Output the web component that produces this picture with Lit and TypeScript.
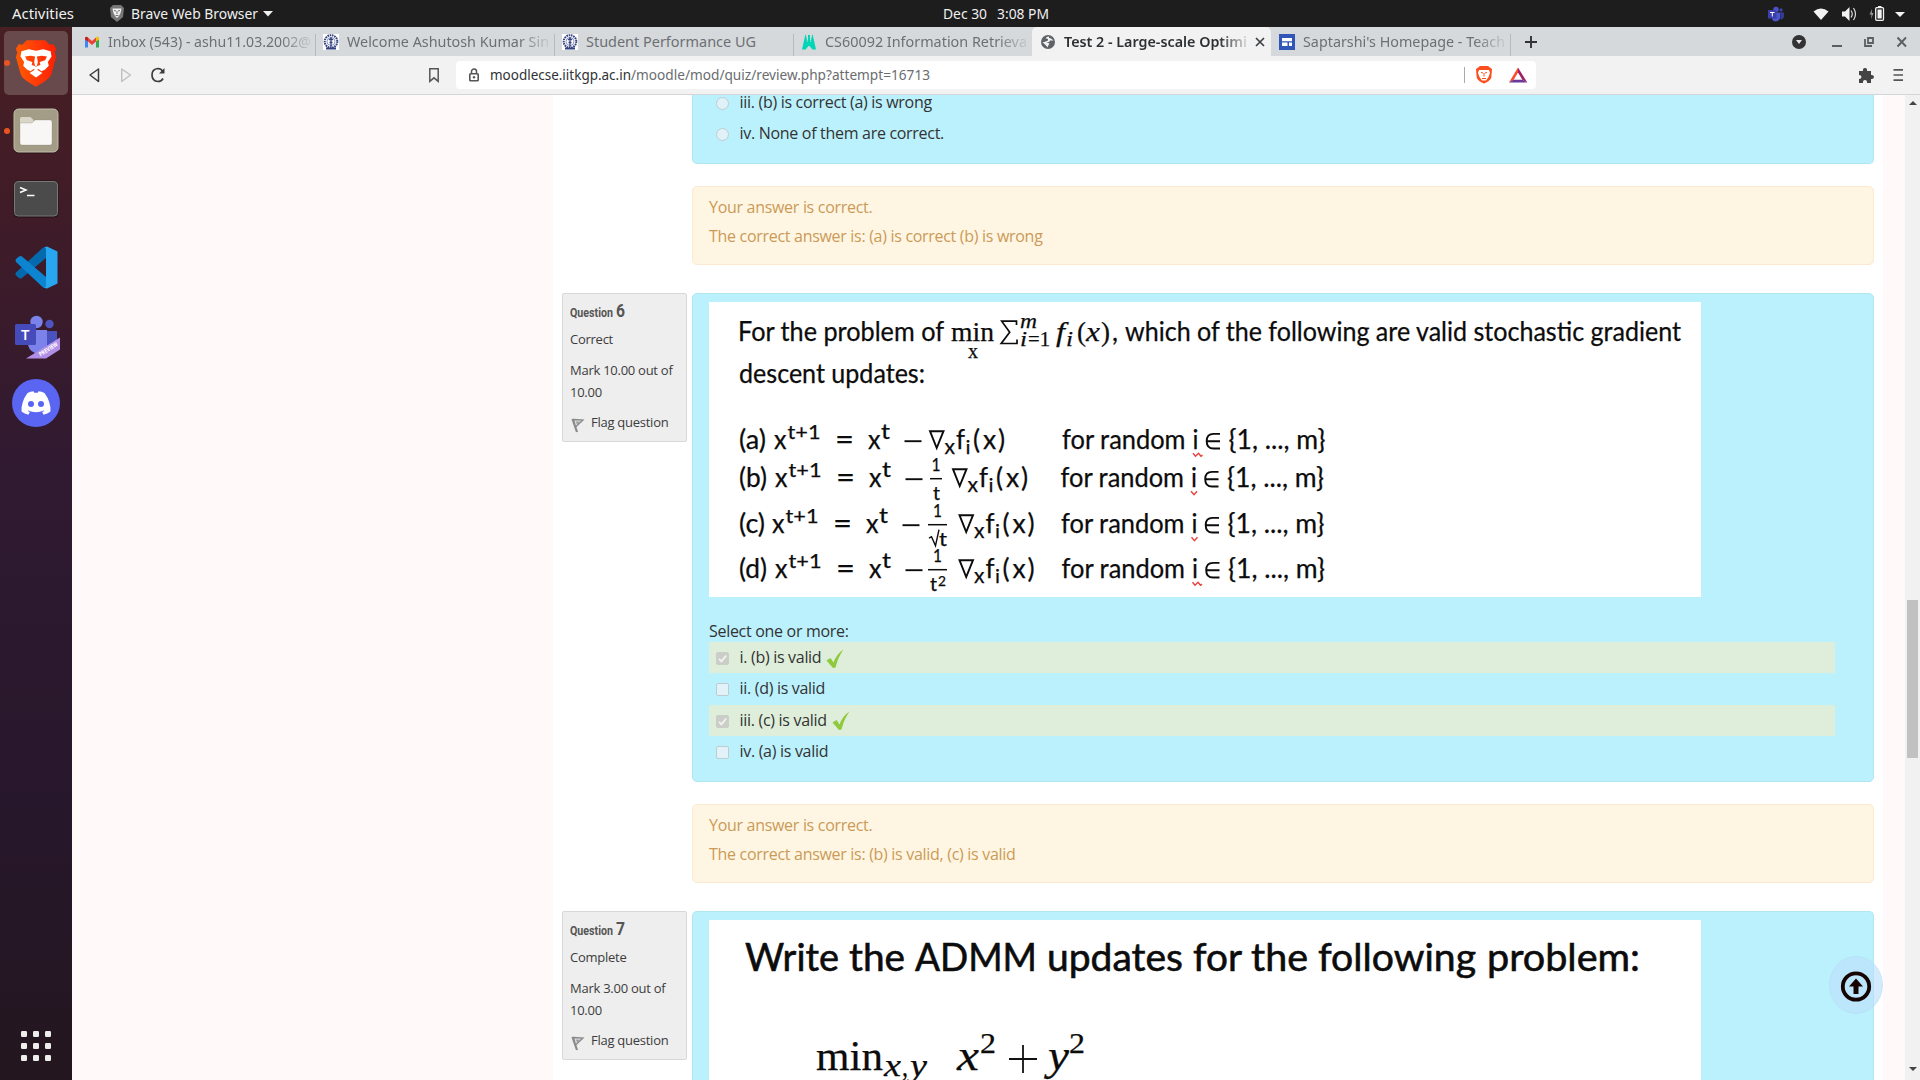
import { LitElement, html, css, svg } from "lit";
import { customElement } from "lit/decorators.js";

/* One line of text drawn to an exact advance width. */
const fit = (text: string, width: number, cls = "", size = 14.8) => html`
  <svg class="fit ${cls}" width=${width} height="20" viewBox="0 0 ${width} 20">
    <text x="0" y="15" font-size=${size} textLength=${width} lengthAdjust="spacingAndGlyphs">${text}</text>
  </svg>`;

const braveLogo = html`<svg width="42" height="50" viewBox="0 0 46 52">
  <defs><linearGradient id="bg"><stop offset="0" stop-color="#ff5a00"/><stop offset=".55" stop-color="#ff3a0a"/><stop offset="1" stop-color="#ff1e00"/></linearGradient></defs>
  <path fill="url(#bg)" d="M13 1h20l5 5 4-.500 3 5-1.500 4 1.500 5-5 18c-1 4-4 6-8 9l-9 5.500-9-5.500c-4-3-7-5-8-9L1 19.500l1.500-5L1 10.500l3-5 4 .500z"/>
  <path fill="#fff" d="M7 13l8-2 8 1.500L31 11l8 2 1 6-4 6 1 4-4 4-4 2-4-3 3-3-1-4 6-2 2-4-6-1-5 1 1 6-1 4-1 .500-1-.500-1-4 1-6-5-1-6 1 2 4 6 2-1 4 3 3-4 3-4-2-4-4 1-4-4-6z"/>
  <path fill="#fff" d="M17 28l4 1 2 1 2-1 4-1-2 4-4 2-4-2zM16 37l7-4.500 7 4.500-7 5z"/>
</svg>`;

const filesLogo = html`<svg width="46" height="46" viewBox="0 0 46 46">
  <rect x=".5" y=".5" width="45" height="45" rx="5" fill="#2b1318"/>
  <rect x="1" y="1" width="44" height="43" rx="4.500" fill="#a39c86" stroke="#c5bfac"/>
  <path d="M7 10.500q0-1.500 1.500-1.500h9l3 3v6H7z" fill="#d9d5c7"/>
  <path d="M7 15h12l3-3h15q2 0 2 2v21q0 2-2 2H9q-2 0-2-2z" fill="#f8f7f5" stroke="#7d7766" stroke-opacity=".35" stroke-width=".7"/>
</svg>`;

const terminalLogo = html`<svg width="46" height="38" viewBox="0 0 46 38">
  <rect x=".5" y=".5" width="45" height="37" rx="4.500" fill="#221316"/>
  <rect x="1.500" y="1.500" width="43" height="34.500" rx="3.500" fill="#4b4b4b" stroke="#777"/>
  <path d="M7 7.500l6 2.500-6 2.500" fill="none" stroke="#fff" stroke-width="1.500"/><path d="M14 15.500h7.500" stroke="#fff" stroke-width="1.500"/>
</svg>`;

const codeLogo = html`<svg width="43" height="43" viewBox="0 0 43 43">
  <path fill="#0569ad" d="M31 1v11L7 32q-1.500 1-3 0L1 29.500q-1-1.500 0-3L27 2.500q2-2 4-1.500z"/>
  <path fill="#0d84d0" d="M31 42V31L7 10.500q-1.500-1-3 0L1 13q-1 1.500 0 3l26 24.500q2 2 4 1.500z"/>
  <path fill="#28a6f0" d="M32 .500l10.500 5v32L32 42.500q-1.500 0-3-1.500 2 1 2-1.500V3.500Q31 1 29 2q1-1.500 3-1.500z"/>
</svg>`;

const teamsLogo = html`<svg class="teams" width="46" height="44" viewBox="0 0 46 44">
  <circle cx="35.500" cy="9" r="4.200" fill="#4e55c0"/><circle cx="22.500" cy="7" r="6.200" fill="#7b83eb"/>
  <path fill="#4a52bd" d="M32 16h11v12q0 7-7 7h-4z"/>
  <path fill="#7b83eb" d="M14 15h19v15q0 8-8 9-9-1-11-9z"/>
  <rect x="1" y="9" width="21" height="21" rx="1.500" fill="#464bbc"/>
  <text x="7" y="25" font-family="Open Sans" font-weight="600" font-size="15" fill="#fff">T</text>
  <path fill="#b28fe6" d="M12 43.500L46 22.500v12L32 43.500z"/>
  <text transform="translate(26.500 41.500) rotate(-32)" textLength="21" lengthAdjust="spacingAndGlyphs" font-family="Open Sans" font-weight="700" font-size="6" fill="#fff">PREVIEW</text>
</svg>`;

const discordLogo = html`<svg width="48" height="48" viewBox="0 0 48 48">
  <circle cx="24" cy="24" r="24" fill="#5a65f2"/>
  <path fill="#fff" d="M15.500 14q3-1.500 6-1.800l.8 1.600q1.700-.3 3.400 0l.8-1.600q3 .3 6 1.800 6.500 9 6 18.500-3 2.200-6.800 3.200l-1.600-2.600 2.300-1.200-.5-.4q-7.900 3.500-15.800 0l-.5.4 2.300 1.200-1.600 2.600q-3.800-1-6.800-3.200-.5-9.500 6-18.500z"/>
  <circle cx="19" cy="25" r="3" fill="#5a65f2"/><circle cx="29" cy="25" r="3" fill="#5a65f2"/>
</svg>`;

const gmail = html`<svg width="16" height="16" viewBox="0 0 16 16"><path fill="#4285f4" d="M1 4v9.500h3V7z"/><path fill="#34a853" d="M15 4v9.500h-3V7z"/><path fill="#ea4335" d="M4 3.500L8 7l4-3.500V7.500L8 11 4 7.500z"/><path fill="#c5221f" d="M1 3.500Q2.500 2 4 3.500v4L1 5.500z"/><path fill="#fbbc04" d="M15 3.500Q13.500 2 12 3.500v4l3-2z"/></svg>`;
const kgp = html`<svg width="16" height="16" viewBox="0 0 16 16"><rect width="16" height="16" fill="#fff"/><circle cx="8" cy="7.500" r="6.300" fill="none" stroke="#34427f" stroke-width="2" stroke-dasharray="1.600 .7"/><circle cx="8" cy="7.500" r="4" fill="none" stroke="#6d78a8" stroke-width=".8"/><path d="M8 3v10M6 6l2-1.500L10 6M6.500 8.500h3" stroke="#34427f" stroke-width="1.300" fill="none"/><path d="M3 14.500h10" stroke="#34427f" stroke-width="2"/></svg>`;
const teal = html`<svg width="16" height="16" viewBox="0 0 16 16"><path fill="#00d5b5" d="M4.500 0l1.800 6.500h3.400L11.500 0 15 15.500h-3.500L8.500 12h-1l-3 3.500H1z"/><path fill="#00d5b5" d="M7 1h2v7H7z"/><path d="M6.300 1v7M9.700 1v7" stroke="#d5d9dc" stroke-width=".6"/></svg>`;
const globe = html`<svg width="16" height="16" viewBox="0 0 16 16"><circle cx="8" cy="8" r="7" fill="#5f6368"/><path fill="#f2f2f2" d="M9 2.500q-3 0-3.200 1.800L8 5v1.500L4.500 8H2.500L6 11.500 8 13.500V12L9.500 9.500 6.500 8.500 9 8l1-1.500h3.500L11 4.500 9 4z"/></svg>`;
const sites = html`<svg width="16" height="16" viewBox="0 0 16 16"><rect width="16" height="16" fill="#3056b8"/><path fill="#fff" d="M3 4h10v3.200H3zM3 8.500h5.500v3.500H3zM10 8.500h3v3.500h-3z"/></svg>`;

const flag = html`<svg width="14" height="16" viewBox="0 0 14 16"><path d="M1.500 2l4.500 13" stroke="#8a8a8a" stroke-width="2.200"/><path d="M2.500 2.500l9.500.5-7.500 7z" fill="#ddd" stroke="#8a8a8a" stroke-width="1.300"/><path d="M5 4.500l4 .3-3 2.700z" fill="#999"/></svg>`;
const tick = html`<svg class="tick" width="18" height="19" viewBox="0 0 18 19"><path fill="#8fc93c" d="M.5 11.500l4-2.500 3 4.500Q10.500 5 17.500.500 12 8 9.500 18.500L7 19z"/></svg>`;
const box = (on: boolean) => html`<svg class="mark" width="13" height="13" viewBox="0 0 13 13">
  <rect x=".5" y=".5" width="12" height="12" rx="1.500" fill=${on ? "#cacdc8" : "#e3f2f8"} stroke=${on ? "#cacdc8" : "#bccdd2"}/>
  ${on ? svg`<path d="M3 6.800l2.500 2.500L10.200 3.500" fill="none" stroke="#f1f3ef" stroke-width="1.900"/>` : ""}</svg>`;
const radio = html`<svg class="mark" width="13" height="13" viewBox="0 0 13 13"><circle cx="6.500" cy="6.500" r="6" fill="#e0f2f7" stroke="#bccdd2"/></svg>`;

/* Text on a slide: x, baseline, width, size. */
const t = (x: number, y: number, w: number, s: number, text: string, cls = "") =>
  svg`<text class=${cls} x=${x} y=${y} font-size=${s} textLength=${w} lengthAdjust="spacingAndGlyphs">${text}</text>`;

interface Update { tag: string; tw: number; y: number; x: number; grad: number; tail: number; frac?: string }

const updates: Update[] = [
  { tag: "(a)", tw: 27, y: 448.7, x: 774, grad: 929, tail: 1062 },
  { tag: "(b)", tw: 28, y: 486.7, x: 775, grad: 952, tail: 1060.5, frac: "t" },
  { tag: "(c)", tw: 26, y: 532.7, x: 772, grad: 958.5, tail: 1061, frac: "√t" },
  { tag: "(d)", tw: 28, y: 577.7, x: 775, grad: 958.5, tail: 1061.5, frac: "t²" },
];

const updateRow = (u: Update) => {
  const wide = u.frac !== "t";
  const fx = wide ? 928 : 930;
  const fw = wide ? 19 : 12;
  const squig = u.tag === "(a)" || u.tag === "(d)";
  return svg`
    ${t(739, u.y, u.tw, 26, u.tag)}
    ${t(u.x, u.y, 12.5, 27, "x")}
    ${t(u.x + 13.5, u.y - 10, 33, 20, "t+1")}
    ${t(u.x + 61, u.y, 19, 29, "=")}
    ${t(u.x + 94, u.y, 12.5, 27, "x")}
    ${t(u.x + 107, u.y - 10, 9, 21, "t")}
    <path d="M${u.x + 130.5} ${u.y - 7.5}h17" class="bar"/>
    ${u.frac ? svg`
      ${t(fx + fw / 2 - 4.5, u.y - 15.5, 9, 17, "1")}
      <path d="M${fx} ${u.y - 8}h${fw}" class="rule"/>
      ${u.frac === "t" ? t(fx + 3, u.y + 13.5, 7, 19, "t") : ""}
      ${u.frac === "√t" ? svg`<path d="M${fx + 1} ${u.y + 5.5}l2.500-1.500 4 9 3.500-16" class="root"/>${t(fx + 11, u.y + 13.5, 8, 20, "t")}` : ""}
      ${u.frac === "t²" ? svg`${t(fx + 2, u.y + 13, 7, 19, "t")}${t(fx + 10, u.y + 8, 8, 14, "2")}` : ""}` : ""}
    <path d="M${u.grad + 1} ${u.y - 17.5}h13.500l-6.800 16.800z" class="nabla"/>
    ${t(u.grad + 15.5, u.y + 5.5, 10.5, 21, "x")}
    ${t(u.grad + 27, u.y, 9, 27, "f")}
    ${t(u.grad + 36.5, u.y + 5.5, 5, 20, "i")}
    <text x="${u.grad + 44} ${u.grad + 54} ${u.grad + 69}" y=${u.y} font-size="26.500">(x)</text>
    ${t(u.tail, u.y, 123.5, 26, "for random")}
    ${t(u.tail + 130.5, u.y, 6, 26, "i")}
    <path d="M${u.tail + 158} ${u.y - 14.8}h-6.500q-6.800 0-6.800 7.300t6.800 7.300h6.500M${u.tail + 144.7} ${u.y - 7.5}h13.300" class="elem"/>
    ${t(u.tail + 166.5, u.y, 97, 26, "{1, ..., m}")}
    <path class="squiggle" d=${squig
      ? `M${u.tail + 131} ${u.y + 4.5}l2.500 3 3-3 2.500 3 1.500-1`
      : `M${u.tail + 130.5} ${u.y + 4.5}l3 3.500 3-3.500`}/>`;
};

const slideSix = html`<svg class="slide" width="992" height="295" viewBox="709 302 992 295">
  ${t(738, 341, 206, 26, "For the problem of")}
  ${t(951, 341, 43, 26.5, "min", "serif")}
  ${t(968, 357.5, 10, 20, "x", "serif")}
  <path d="M1016.500 325v-3.800h-14.800l8 11-8.500 11.300h15.800v-4" class="sigma"/>
  ${t(1020, 328, 17, 20, "m", "serif it")}
  ${t(1020, 346, 7, 20, "i", "serif it")}
  ${t(1028, 346, 22, 20, "=1", "serif")}
  ${t(1056, 341, 9, 27, "f", "serif it")}
  ${t(1066, 346, 7, 20, "i", "serif it")}
  ${t(1077, 341, 9, 27, "(", "serif")}
  ${t(1086, 341, 14, 27, "x", "serif it")}
  ${t(1101, 341, 9, 27, ")", "serif")}
  ${t(1112, 341, 6, 26, ",")}
  ${t(1125, 341, 556, 26, "which of the following are valid stochastic gradient")}
  ${t(739, 382.5, 186, 26, "descent updates:")}
  ${updates.map(updateRow)}
</svg>`;

const slideSeven = html`<svg class="slide" width="992" height="160" viewBox="709 920 992 160">
  ${([["Write", 745, 94], ["the", 849, 56], ["ADMM", 915, 122], ["updates", 1047, 136], ["for", 1193, 49], ["the", 1251, 57], ["following", 1318, 158], ["problem:", 1487, 153]] as [string, number, number][])
    .map(([word, x, w]) => t(x, 970.5, w, 38.5, word, "big"))}
  ${t(816, 1070, 67, 42, "min", "serif")}
  ${t(884, 1076, 17, 32, "x", "serif it")}
  ${t(902, 1076, 6, 30, ",", "serif")}
  ${t(910, 1076, 17, 32, "y", "serif it")}
  ${t(957, 1070, 22, 45, "x", "serif it")}
  ${t(980, 1052.5, 16, 30, "2", "serif")}
  <path d="M1009 1059h28M1023 1045v28" stroke="#111" stroke-width="1.800"/>
  ${t(1048, 1070, 21, 45, "y", "serif it")}
  ${t(1069, 1052.5, 16, 30, "2", "serif")}
</svg>`;

@customElement("app-root")
export class AppRoot extends LitElement {
  static styles = css`
    :host { display: flex; flex-direction: column; width: 1920px; height: 1080px; overflow: hidden; font-family: "Open Sans", "Noto Sans", sans-serif; background: #fff; }
    * { box-sizing: border-box; }
    svg { display: block; flex: none; }
    .fit { font-family: "Noto Sans", "Open Sans", sans-serif; fill: #6c7073; overflow: visible; }
    .light { fill: #f0f0f0; }
    .strong { fill: #2e3133; font-weight: 600; }
    .dark { fill: #303336; }
    .path { fill: #6a6d70; }

    .topbar { height: 27px; flex: none; display: grid; grid-template-columns: 1fr auto 1fr; align-items: center; background: #1d1d1d; padding: 0 14px 0 12px; }
    .topleft { display: flex; align-items: center; }
    .topleft .app { margin: 0 7px 0 36px; }
    .topleft .caret { margin-left: 5px; }
    .clock { display: flex; gap: 10px; margin-left: 73px; }
    .tray { display: flex; align-items: center; justify-content: flex-end; }

    .desktop { flex: 1; display: flex; min-height: 0; }
    .dock { width: 72px; flex: none; display: flex; flex-direction: column; align-items: center; gap: 4px; padding-top: 4px; background: linear-gradient(#481f23, #3d1b29 22%, #301a31 42%, #27172b 75%, #23161e); }
    .slot { position: relative; width: 64px; height: 64px; display: flex; align-items: center; justify-content: center; border-radius: 5px; }
    .slot.active { background: #684a4d; }
    .slot.running::before { content: ""; position: absolute; left: 0; top: 29px; width: 6px; height: 6px; border-radius: 50%; background: #e95420; }
    .teams { margin: 3px 0 0 2px; }
    .apps { margin: auto 0 19px; }

    .browser { flex: 1; display: flex; flex-direction: column; min-width: 0; }
    .tabs { height: 29px; flex: none; display: flex; align-items: stretch; background: #d5d9dc; }
    .tab { width: 239px; display: flex; align-items: center; gap: 8px; padding-left: 8px; position: relative; }
    .tab.line::after { content: ""; position: absolute; right: -1px; top: 7px; bottom: 0; width: 1px; background: #b5babd; }
    .tab.first { width: 243px; padding-left: 12px; }
    .tab.on { background: #f2f2f2; border-radius: 5px 5px 0 0; }
    .fade { -webkit-mask-image: linear-gradient(90deg, #000 85%, transparent 102%); mask-image: linear-gradient(90deg, #000 85%, transparent 102%); }
    .plus { margin: auto 0 auto 15px; }
    .window { margin: 0 12px 0 auto; display: flex; align-items: center; }

    .toolbar { height: 39px; flex: none; display: flex; align-items: center; background: #f2f2f2; border-bottom: 1px solid #d3d6d8; padding-left: 16px; }
    .address { width: 1080px; height: 28px; display: flex; align-items: center; background: #fff; border-radius: 4px; padding: 0 8px 0 13px; }
    .address .lock { margin-right: 11px; }
    .address .split { width: 1px; height: 16px; background: #aaa; margin-left: auto; }

    .page { flex: 1; display: flex; min-height: 0; background: #fff9f9; }
    .content { margin-left: 481px; width: 1330px; height: 985px; overflow: hidden; background: #fff; padding: 0 9px; display: grid; grid-template-columns: 125px 1182px; column-gap: 5px; grid-template-rows: 69px 85px 489px 85px 169px; row-gap: 22px; align-items: start; }
    .feedback, .formulation { grid-column: 2; font-size: 16px; letter-spacing: -.300px; }
    .formulation { height: 100%; background: #bbf1fc; border: 1px solid #b0e6ef; border-radius: 5px; padding: 8px 38px 0 16px; color: #333; }
    .formulation.cut { border-top: 0; border-radius: 0 0 5px 5px; padding-top: 0; }
    .formulation.last { border-bottom: 0; border-radius: 5px 5px 0 0; }
    .feedback { height: 79px; background: #fef6e2; border: 1px solid #fbe9d0; border-radius: 5px; padding: 6px 16px; color: #cb9a58; line-height: 29px; }
    .info { height: 149px; background: #eee; border: 1px solid #d8d8d8; border-radius: 2px; padding: 7px 0 0 7px; font-size: 13px; letter-spacing: -.260px; line-height: 22px; color: #3c3c3c; }
    .info div { margin-bottom: 9px; }
    .info .no { height: 22px; margin-bottom: 5px; }
    .info .flag { display: flex; align-items: center; gap: 6px; margin-top: -1px; }
    .info .flag svg { margin: 5px 0 0 1px; }
    .heading { fill: #555; font-family: Roboto, sans-serif; font-weight: 700; overflow: visible; letter-spacing: 0; }
    .slide { background: #fff; font-family: Lato, "Open Sans", sans-serif; fill: #0c0c0c; stroke: #0c0c0c; stroke-width: .25; letter-spacing: 0; }
    .serif { font-family: "Liberation Serif", serif; }
    .it { font-style: italic; }
    .big { stroke-width: .6; }
    .bar { stroke-width: 1.900; fill: none; }
    .rule { stroke-width: 1.500; fill: none; }
    .root { stroke-width: 1.400; fill: none; }
    .nabla { stroke-width: 1.900; fill: none; }
    .elem { stroke-width: 1.900; fill: none; }
    .sigma { stroke-width: 1.700; fill: none; }
    .squiggle { stroke: #e8443c; stroke-width: 1.400; fill: none; }
    .prompt { height: 22px; line-height: 22px; margin-top: 23px; }
    .answer { display: flex; align-items: center; height: 31.300px; padding-left: 7px; }
    .answer .mark { margin: 2px 10.500px 0 0; }
    .answer .label { line-height: 28px; margin-bottom: 1px; }
    .answer.right { background: #deeeda; }
    .tick { margin: 1px 0 0 5px; }
    .cut .answer { height: 31px; }
    .cut .answer:first-child { margin-top: -8px; }
    .scroll { margin-left: auto; width: 15px; background: #f1f1f1; display: flex; flex-direction: column; align-items: center; padding: 6px 0 9px; }
    .thumb { width: 11px; height: 158px; background: #c1c1c1; margin-top: 495px; }
    .scroll .down { margin-top: auto; }
    .totop { position: absolute; left: 1829px; top: 956px; }
  `;

  info(no: string, state: string, mark: string) {
    return html`<div class="info">
      <div class="no"><svg width="60" height="22" class="heading"><text x="0" y="15.500" font-size="12.500" textLength="43" lengthAdjust="spacingAndGlyphs">Question</text><text x="46" y="15.500" font-size="17.500" textLength="9" lengthAdjust="spacingAndGlyphs">${no}</text></svg></div>
      <div>${state}</div><div>${mark}<br />10.00</div>
      <div class="flag">${flag}<span>Flag question</span></div></div>`;
  }

  render() {
    return html`
      <header class="topbar">
        <div class="topleft">${fit("Activities", 62, "light")}
          <svg class="app" width="14" height="17" viewBox="0 0 14 17"><path d="M3 0h8l3 3-1 9-6 5-6-5-1-9z" fill="#777"/><path d="M2.500 3.500h9L10.500 8 9 11l-2 2-2-2-1.500-3z" fill="#eee"/><path d="M4 5.500l2 .500M10 5.500L8 6M7 6v3M5.500 10.500h3" stroke="#666" stroke-width=".9"/></svg>
          ${fit("Brave Web Browser", 127, "light")}
          <svg class="caret" width="10" height="6" viewBox="0 0 10 6"><path d="M0 0h10L5 5.500z" fill="#f0f0f0"/></svg></div>
        <div class="clock">${fit("Dec 30", 44, "light")}${fit("3:08 PM", 52, "light")}</div>
        <div class="tray">
          <svg width="138" height="20" viewBox="1768 3 138 20">
            <circle cx="1776" cy="8.500" r="2.700" fill="#4c53c4"/><circle cx="1781" cy="9" r="1.700" fill="#3d44a5"/><path d="M1772 11.500h8v6q-1.500 3-4.500 3-2.500 0-3.500-2.500z" fill="#4d55cb"/><path d="M1780 11.500h4v4q-.5 3-3.500 3z" fill="#343b96"/><rect x="1768" y="9" width="8.500" height="8.500" fill="#3b3fae"/><path d="M1770 11.500h4.500M1772.300 11.500v4" stroke="#fff"/>
            <path d="M1813.500 10.500q7.500-6 15 0L1821 19z" fill="#f2f2f2"/>
            <path d="M1842 10.500h3l4.500-4.500v14l-4.500-4.500h-3z" fill="#f2f2f2"/><path d="M1851 9.500q2.500 3.500 0 7M1853.500 7q4 6 0 12" stroke="#ddd" stroke-width="1.200" fill="none"/>
            <path d="M1872 8l-2.500 5.500h2l-.5 4.500 2.500-6h-1.700z" fill="#999"/><rect x="1875.700" y="6.700" width="7.800" height="12.600" rx="1" fill="none" stroke="#f2f2f2" stroke-width="1.300"/><rect x="1877.500" y="8.500" width="4.200" height="9" fill="#f2f2f2"/><path d="M1878 5.500h3.500" stroke="#f2f2f2"/>
            <path d="M1895 11h10l-5 5z" fill="#f2f2f2"/>
          </svg></div>
      </header>
      <div class="desktop">
        <nav class="dock">
          <div class="slot active running">${braveLogo}</div>
          <div class="slot running">${filesLogo}</div>
          <div class="slot">${terminalLogo}</div>
          <div class="slot">${codeLogo}</div>
          <div class="slot">${teamsLogo}</div>
          <div class="slot">${discordLogo}</div>
          <svg class="apps" width="30" height="30" viewBox="0 0 30 30" fill="#eeeeec">
            ${[0, 12, 24].map((y) => [0, 12, 24].map((x) => svg`<rect x=${x} y=${y} width="6" height="6" rx="1.300"/>`))}</svg>
        </nav>
        <main class="browser">
          <div class="tabs">
            <div class="tab first line">${gmail}${fit("Inbox (543) - ashu11.03.2002@", 203, "fade")}</div>
            <div class="tab line">${kgp}${fit("Welcome Ashutosh Kumar Sin", 202, "fade")}</div>
            <div class="tab line">${kgp}${fit("Student Performance UG", 170)}</div>
            <div class="tab">${teal}${fit("CS60092 Information Retrieva", 202, "fade")}</div>
            <div class="tab on">${globe}${fit("Test 2 - Large-scale Optimi", 183, "strong fade")}
              <svg width="10" height="10" viewBox="0 0 10 10"><path d="M1 1l8 8M9 1L1 9" stroke="#3c4043" stroke-width="1.700"/></svg></div>
            <div class="tab line">${sites}${fit("Saptarshi's Homepage - Teach", 202, "fade")}</div>
            <svg class="plus" width="12" height="12" viewBox="0 0 12 12"><path d="M6 0v12M0 6h12" stroke="#333" stroke-width="1.900"/></svg>
            <div class="window"><svg width="116" height="16" viewBox="1792 34 116 16">
              <circle cx="1799" cy="42" r="7" fill="#333"/><path d="M1796 40h6l-3 4z" fill="#e8e8e8"/>
              <path d="M1832 46h10" stroke="#5c5f61" stroke-width="2"/>
              <path d="M1868 38h5v5h-5z" stroke="#5c5f61" stroke-width="1.800" fill="none"/><path d="M1865 39v7h7" stroke="#5c5f61" stroke-width="1.800" fill="none"/>
              <path d="M1897.500 37.500l8.500 9M1906 37.500l-8.500 9" stroke="#5c5f61" stroke-width="1.900"/></svg></div>
          </div>
          <div class="toolbar">
            <svg width="368" height="28" viewBox="88 61 368 28">
              <path d="M98.500 69v12.500L90 75z" fill="none" stroke="#3c3c3c" stroke-width="1.500" stroke-linejoin="round"/>
              <path d="M121.700 69v12.500L130.500 75z" fill="none" stroke="#bfbfbf" stroke-width="1.400" stroke-linejoin="round"/>
              <path d="M163 78.500q-1.500 3-5 3-6-.5-6-6.500t6-6.500q3 0 5 3" fill="none" stroke="#3c3c3c" stroke-width="1.700"/><path d="M164.500 68v5.500H159z" fill="#3c3c3c"/>
              <path d="M429.800 68.800h8.400v12.500l-4.200-3.500-4.200 3.500z" fill="none" stroke="#555" stroke-width="1.500"/></svg>
            <div class="address">
              <svg class="lock" width="10" height="14" viewBox="0 0 10 14"><path d="M2.500 6V3.500a2.500 2.500 0 015 0V6" fill="none" stroke="#555" stroke-width="1.500"/><rect x=".8" y="5.800" width="8.400" height="7" rx=".8" fill="none" stroke="#555" stroke-width="1.600"/><circle cx="5" cy="9.300" r="1.200" fill="#555"/></svg>
              ${fit("moodlecse.iitkgp.ac.in", 141, "dark")}${fit("/moodle/mod/quiz/review.php?attempt=16713", 299, "path")}
              <span class="split"></span>
              <svg width="63" height="28" viewBox="1465 61 63 28">
                <path d="M1480 66h8l4 3-.7 8.500q-1 3.500-7.300 6-6.300-2.500-7.300-6l-.7-8.500z" fill="#fb4f20"/><path d="M1479 70h10l1 3-1.500 4-2.500 3.500h-4l-2.500-3.500-1.500-4z" fill="#fff"/><path d="M1481 72.500l2 .5M1487 72.500l-2 .5M1484 73v3.500M1482 78.500h4" stroke="#fb4f20" fill="none"/>
                <path d="M1518 67.500l-9 15 4.500-2.500 4.500-7.500z" fill="#ff4a2a"/><path d="M1518 67.500l9.300 15-4.800-2.500-4.500-7.500z" fill="#a02066"/><path d="M1509 82.500h18.300l-4.800-2.700h-9z" fill="#6a3a9b"/></svg>
            </div>
            <svg width="368" height="28" viewBox="1536 61 368 28">
              <path d="M1859 71h4q-.5-3 2-3t2 3h4v4q3-.3 3 2t-3 2v4h-4q.3-3-2-3t-2 3h-4v-4q2.500 0 2.500-2t-2.500-2z" fill="#444"/>
              <path d="M1893.500 69.800h9.500M1893.500 75h9.500M1893.500 80.200h9.500" stroke="#555" stroke-width="1.700"/></svg>
          </div>
          <div class="page">
            <section class="content">
              <div class="formulation cut">
                <div class="answer">${radio}<span class="label">iii. (b) is correct (a) is wrong</span></div>
                <div class="answer">${radio}<span class="label">iv. None of them are correct.</span></div>
              </div>
              <div class="feedback">Your answer is correct.<br />The correct answer is: (a) is correct (b) is wrong</div>
              ${this.info("6", "Correct", "Mark 10.00 out of")}
              <div class="formulation">
                ${slideSix}
                <div class="prompt">Select one or more:</div>
                <div class="answer right">${box(true)}<span class="label">i. (b) is valid</span>${tick}</div>
                <div class="answer">${box(false)}<span class="label">ii. (d) is valid</span></div>
                <div class="answer right">${box(true)}<span class="label">iii. (c) is valid</span>${tick}</div>
                <div class="answer">${box(false)}<span class="label">iv. (a) is valid</span></div>
              </div>
              <div class="feedback">Your answer is correct.<br />The correct answer is: (b) is valid, (c) is valid</div>
              ${this.info("7", "Complete", "Mark 3.00 out of")}
              <div class="formulation last">${slideSeven}</div>
            </section>
            <div class="scroll">
              <svg width="8" height="4" viewBox="0 0 8 4"><path d="M0 4h8L4 0z" fill="#444"/></svg>
              <div class="thumb"></div>
              <svg class="down" width="8" height="4" viewBox="0 0 8 4"><path d="M0 0h8L4 4z" fill="#444"/></svg>
            </div>
          </div>
        </main>
      </div>
      <svg class="totop" width="54" height="58" viewBox="0 0 54 58"><ellipse cx="27" cy="29" rx="26.500" ry="28.500" fill="#bbe0fb" fill-opacity=".65" stroke="#b4dcf8" stroke-opacity=".6"/><circle cx="27" cy="30.500" r="13.200" fill="none" stroke="#170503" stroke-width="3.800"/><path d="M27 22.500l7 8h-4.500v7.500h-5v-7.500H20z" fill="#170503"/></svg>
    `;
  }
}
